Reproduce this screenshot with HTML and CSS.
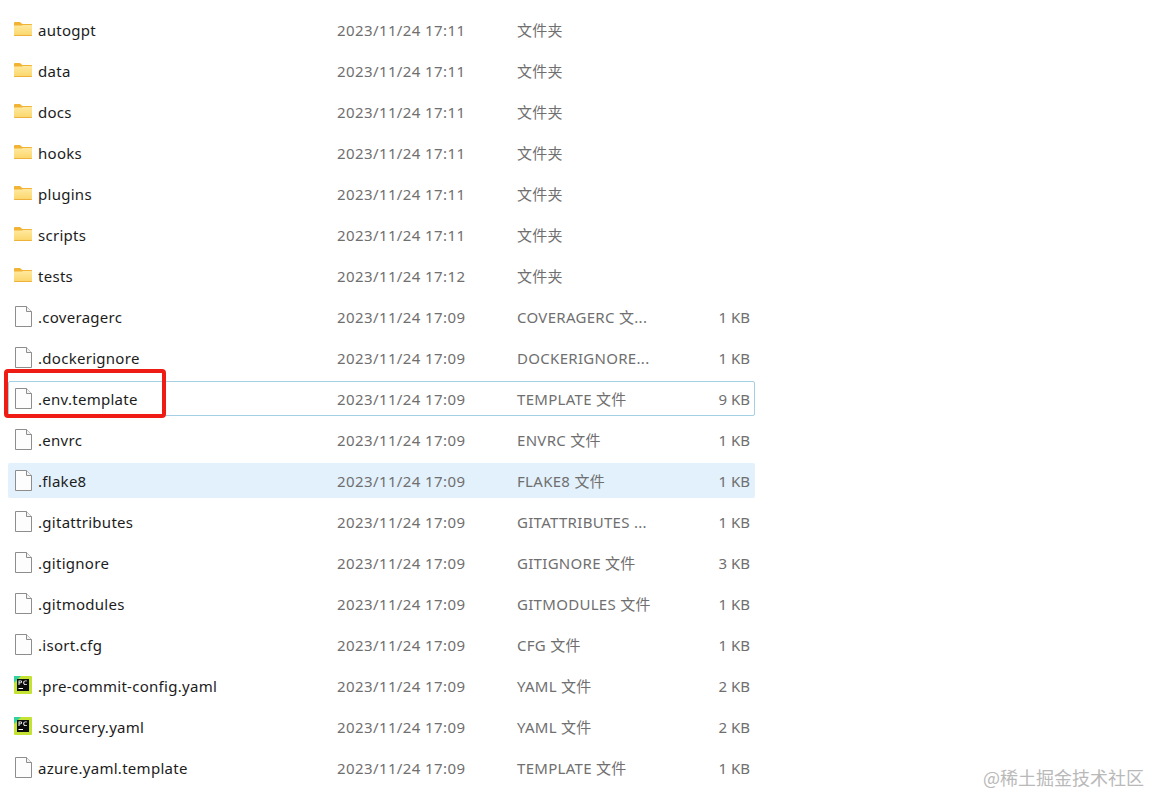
FILE: index.html
```html
<!DOCTYPE html>
<html lang="zh-CN">
<head>
<meta charset="utf-8">
<title>Files</title>
<link rel="stylesheet" href="styles.css">
</head>
<body>
<svg class="defs" width="0" height="0" aria-hidden="true">
  <defs>
    <linearGradient id="fg" x1="0" y1="0" x2="0" y2="1"><stop offset="0" stop-color="#ffe9a0"/><stop offset="1" stop-color="#fbd568"/></linearGradient>
    <symbol id="folder" viewBox="0 0 18 14">
      <path d="M0 1.2C0 .5.5 0 1.2 0h4.3c.4 0 .7.1 1 .4L8.300 2H17c.6 0 1 .4 1 1v3H0z" fill="#f2b233"/>
      <path d="M0 3.600h7.800L9.200 3H17c.6 0 1 .4 1 1v9c0 .6-.4 1-1 1H1c-.6 0-1-.4-1-1z" fill="url(#fg)"/>
      <path d="M0 13h18v.2c0 .5-.4.8-1 .8H1c-.6 0-1-.3-1-.8z" fill="#eeb23c"/>
    </symbol>
    <symbol id="file" viewBox="0 0 17 21">
      <path d="M.5.5h11l5 5v15H.5z" fill="#fdfdfd" stroke="#8d8d8d"/>
      <path d="M11.500.5v5h5" fill="#f4f4f4" stroke="#8d8d8d"/>
    </symbol>
    <symbol id="pc" viewBox="0 0 18 18">
      <rect width="18" height="18" rx="1" fill="#c4e234"/>
      <path d="M0 0h7L0 7z" fill="#35d0a0"/>
      <rect x="3" y="3" width="12" height="12" fill="#0c0c0c"/>
      <rect x="4.500" y="12" width="4.500" height="1" fill="#fff"/>
      <path d="M4.500 9V4.500h2.200a1.300 1.300 0 0 1 0 2.700H5.500V9zM5.500 5.300v1.100h1.100a.55.55 0 0 0 0-1.100zM12.800 8.800c-2 .5-3.600-.1-3.600-2.100 0-2 1.600-2.600 3.600-2.100v.8c-1.500-.4-2.600-.1-2.600 1.300 0 1.400 1.100 1.700 2.600 1.300z" fill="#fff"/>
    </symbol>
  </defs>
</svg>
<main class="list">
  <div class="row"><svg class="ico ico-folder"><use href="#folder"/></svg><span class="name">autogpt</span><span class="date">2023/11/24 17:11</span><span class="type">文件夹</span><span class="size"></span></div>
  <div class="row"><svg class="ico ico-folder"><use href="#folder"/></svg><span class="name">data</span><span class="date">2023/11/24 17:11</span><span class="type">文件夹</span><span class="size"></span></div>
  <div class="row"><svg class="ico ico-folder"><use href="#folder"/></svg><span class="name">docs</span><span class="date">2023/11/24 17:11</span><span class="type">文件夹</span><span class="size"></span></div>
  <div class="row"><svg class="ico ico-folder"><use href="#folder"/></svg><span class="name">hooks</span><span class="date">2023/11/24 17:11</span><span class="type">文件夹</span><span class="size"></span></div>
  <div class="row"><svg class="ico ico-folder"><use href="#folder"/></svg><span class="name">plugins</span><span class="date">2023/11/24 17:11</span><span class="type">文件夹</span><span class="size"></span></div>
  <div class="row"><svg class="ico ico-folder"><use href="#folder"/></svg><span class="name">scripts</span><span class="date">2023/11/24 17:11</span><span class="type">文件夹</span><span class="size"></span></div>
  <div class="row"><svg class="ico ico-folder"><use href="#folder"/></svg><span class="name">tests</span><span class="date">2023/11/24 17:12</span><span class="type">文件夹</span><span class="size"></span></div>
  <div class="row"><svg class="ico ico-file"><use href="#file"/></svg><span class="name">.coveragerc</span><span class="date">2023/11/24 17:09</span><span class="type">COVERAGERC 文...</span><span class="size">1 KB</span></div>
  <div class="row"><svg class="ico ico-file"><use href="#file"/></svg><span class="name">.dockerignore</span><span class="date">2023/11/24 17:09</span><span class="type">DOCKERIGNORE...</span><span class="size">1 KB</span></div>
  <div class="row row-focus"><svg class="ico ico-file"><use href="#file"/></svg><span class="name">.env.template</span><span class="date">2023/11/24 17:09</span><span class="type">TEMPLATE 文件</span><span class="size">9 KB</span></div>
  <div class="row"><svg class="ico ico-file"><use href="#file"/></svg><span class="name">.envrc</span><span class="date">2023/11/24 17:09</span><span class="type">ENVRC 文件</span><span class="size">1 KB</span></div>
  <div class="row row-hover"><svg class="ico ico-file"><use href="#file"/></svg><span class="name">.flake8</span><span class="date">2023/11/24 17:09</span><span class="type">FLAKE8 文件</span><span class="size">1 KB</span></div>
  <div class="row"><svg class="ico ico-file"><use href="#file"/></svg><span class="name">.gitattributes</span><span class="date">2023/11/24 17:09</span><span class="type">GITATTRIBUTES ...</span><span class="size">1 KB</span></div>
  <div class="row"><svg class="ico ico-file"><use href="#file"/></svg><span class="name">.gitignore</span><span class="date">2023/11/24 17:09</span><span class="type">GITIGNORE 文件</span><span class="size">3 KB</span></div>
  <div class="row"><svg class="ico ico-file"><use href="#file"/></svg><span class="name">.gitmodules</span><span class="date">2023/11/24 17:09</span><span class="type">GITMODULES 文件</span><span class="size">1 KB</span></div>
  <div class="row"><svg class="ico ico-file"><use href="#file"/></svg><span class="name">.isort.cfg</span><span class="date">2023/11/24 17:09</span><span class="type">CFG 文件</span><span class="size">1 KB</span></div>
  <div class="row"><svg class="ico ico-pc"><use href="#pc"/></svg><span class="name">.pre-commit-config.yaml</span><span class="date">2023/11/24 17:09</span><span class="type">YAML 文件</span><span class="size">2 KB</span></div>
  <div class="row"><svg class="ico ico-pc"><use href="#pc"/></svg><span class="name">.sourcery.yaml</span><span class="date">2023/11/24 17:09</span><span class="type">YAML 文件</span><span class="size">2 KB</span></div>
  <div class="row"><svg class="ico ico-file"><use href="#file"/></svg><span class="name">azure.yaml.template</span><span class="date">2023/11/24 17:09</span><span class="type">TEMPLATE 文件</span><span class="size">1 KB</span></div>
</main>
<div class="redbox"></div>
<div class="mark">@稀土掘金技术社区</div>
</body>
</html>
```
FILE: styles.css
```css
html, body { margin: 0; padding: 0; background: #fff; }
body {
  width: 1150px;
  height: 792px;
  overflow: hidden;
  position: relative;
  font-family: "Noto Sans", "Noto Sans CJK SC", sans-serif;
}
.defs { position: absolute; }
.list {
  display: flex;
  flex-direction: column;
  gap: 6px;
  width: 747px;
  margin-left: 8px;
  padding-top: 12px;
}
.row {
  height: 35px;
  box-sizing: border-box;
  display: grid;
  grid-template-columns: 30px 299px 180px 1fr auto;
  align-items: center;
  padding: 0 5px 0 0;
  border-radius: 2px;
}
.row-focus { border: 1px solid #a5cfe3; padding: 0 4px 0 0; grid-template-columns: 29px 299px 180px 1fr auto; }
.row-focus .ico { margin-left: 6px; }
.row-hover { background: #e3f1fc; }
.ico { display: block; }
.ico-folder { width: 18px; height: 14px; margin-left: 6px; margin-top: -1px; }
.ico-file { width: 17px; height: 21px; margin-left: 7px; }
.ico-pc { width: 18px; height: 18px; margin-left: 6px; margin-top: -1px; }
.name { font-size: 15px; letter-spacing: .28px; color: #1c1c1c; white-space: nowrap; }
.date, .type, .size { font-size: 15px; color: #6f6f6f; white-space: nowrap; }
.date { letter-spacing: .4px; }
.type { letter-spacing: .3px; }
.size { text-align: right; }
.redbox {
  position: absolute;
  left: 4px;
  top: 369px;
  width: 154px;
  height: 41px;
  border: 4px solid #ee1c14;
  border-radius: 4px;
}
.mark {
  position: absolute;
  right: 6px;
  top: 764px;
  font-size: 18px;
  color: #b9b9b9;
  font-family: "Noto Sans CJK SC", sans-serif;
}
```
